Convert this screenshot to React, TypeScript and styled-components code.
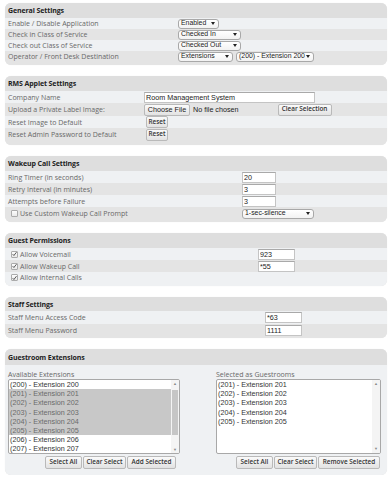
import React from 'react';
import styled, { createGlobalStyle, css } from 'styled-components';

const Global = createGlobalStyle`
  html, body { margin: 0; padding: 0; background: #ffffff; }
  body { font-family: "Open Sans", "Noto Sans", sans-serif; }
  * { box-sizing: border-box; }
`;

const Page = styled.div`
  width: 391px;
  padding: 3px 4px 0 5px;
  display: flex;
  flex-direction: column;
  gap: 11px;
`;

const Panel = styled.section`
  border-radius: 6px;
  overflow: hidden;
  background: #e5e5e5;
  box-shadow: 0 0 1px rgba(0, 0, 0, 0.08);
`;

const Header = styled.div<{ $h?: number }>`
  height: ${(p) => p.$h ?? 15}px;
  background: #dedede;
  display: flex;
  align-items: center;
  padding-left: 3px;
  font-weight: 700;
  font-size: 7px;
  color: #222;
  letter-spacing: -0.1px;
`;

const Row = styled.div<{ $alt?: boolean; $h: number; $labelW: number; $pb?: number }>`
  display: grid;
  grid-template-columns: ${(p) => p.$labelW}px 1fr;
  align-items: center;
  height: ${(p) => p.$h + (p.$pb ?? 0)}px;
  padding-bottom: ${(p) => p.$pb ?? 0}px;
  background: ${(p) => (p.$alt ? '#e4e4e4' : '#eff1f3')};
`;

const Label = styled.div<{ $indent?: number }>`
  padding-left: ${(p) => p.$indent ?? 3}px;
  font-size: 7px;
  color: #686868;
  white-space: nowrap;
  display: flex;
  align-items: center;
  gap: 2px;
`;

const Value = styled.div`
  display: flex;
  align-items: center;
  gap: 3px;
  white-space: nowrap;
`;

const ctrlFont = css`
  font-family: "Liberation Sans", Arial, sans-serif;
  font-size: 7.2px;
  color: #222;
`;

const SelectBox = styled.div<{ $w: number }>`
  font-family: "Liberation Sans", Arial, sans-serif;
  font-size: 6.9px;
  color: #222;
  width: ${(p) => p.$w}px;
  height: 10px;
  border: 1px solid #a8a8a8;
  border-radius: 3px;
  background: linear-gradient(#ffffff, #f2f2f2);
  display: flex;
  align-items: center;
  justify-content: space-between;
  padding: 0 3px 0 2px;
  line-height: 1;
  overflow: hidden;
`;

const Arrow = styled.span`
  width: 0;
  height: 0;
  flex: none;
  margin-left: 1px;
  border-left: 2px solid transparent;
  border-right: 2px solid transparent;
  border-top: 3px solid #222;
`;

const TextInput = styled.input<{ $w: number }>`
  ${ctrlFont}
  width: ${(p) => p.$w}px;
  height: 11px;
  border: 1px solid #c4c4c4;
  border-top-color: #a9a9a9;
  background: #fff;
  padding: 0 1px;
  margin: 0;
  outline: none;
`;

const Button = styled.button<{ $w?: number; $h?: number; $plain?: boolean }>`
  ${(p) =>
    p.$plain
      ? ctrlFont
      : css`
          font-family: "Open Sans", "Noto Sans", sans-serif;
          font-size: 6.4px;
          font-weight: 600;
          color: #333;
        `}
  height: ${(p) => p.$h ?? 12}px;
  ${(p) => (p.$w ? `width: ${p.$w}px;` : '')}
  padding: 0 2px;
  margin: 0;
  border: 1px solid #b9b9b9;
  border-radius: 2px;
  background: linear-gradient(#fafafa, #e2e2e2);
  display: inline-flex;
  align-items: center;
  justify-content: center;
  white-space: nowrap;
  line-height: 1;
`;

const FileNote = styled.span`
  ${ctrlFont}
`;

const Check = styled.span`
  width: 7px;
  height: 7px;
  border: 1px solid #ababab;
  border-radius: 1px;
  background: linear-gradient(#fdfdfd, #e9e9e9);
  display: inline-flex;
  align-items: center;
  justify-content: center;
  flex: none;
`;

const CheckMark = () => (
  <svg width="6" height="6" viewBox="0 0 6 6">
    <path d="M0.8 3.2 L2.3 4.8 L5.4 0.8" fill="none" stroke="#4a4a4a" strokeWidth="1.1" />
  </svg>
);

const ExtBody = styled.div`
  background: #eff1f3;
  display: grid;
  grid-template-columns: 208px 1fr;
  padding: 4px 4px 6px 3px;
`;

const ExtCol = styled.div`
  display: flex;
  flex-direction: column;
  align-items: flex-start;
`;

const ColLabel = styled.div`
  font-size: 7px;
  color: #686868;
  height: 10px;
  display: flex;
  align-items: center;
`;

const ListBox = styled.div<{ $w: number }>`
  width: ${(p) => p.$w}px;
  height: 75px;
  border: 1px solid #a8a8a8;
  border-radius: 2px;
  background: #fff;
  display: grid;
  grid-template-columns: 1fr 8px;
  overflow: hidden;
`;

const Items = styled.div`
  display: flex;
  flex-direction: column;
`;

const Item = styled.div<{ $sel?: boolean }>`
  font-family: "Liberation Sans", Arial, sans-serif;
  font-size: 7.2px;
  height: 9.2px;
  line-height: 9.2px;
  padding-left: 1px;
  color: ${(p) => (p.$sel ? '#6a6a6a' : '#333')};
  background: ${(p) => (p.$sel ? '#c8c8c8' : 'transparent')};
`;

const ScrollBar = styled.div`
  background: #f4f4f4;
  position: relative;
  display: flex;
  flex-direction: column;
  justify-content: space-between;
  align-items: center;
  padding: 2px 0;
  font-size: 4px;
  color: #888;
  line-height: 1;
`;

const Thumb = styled.div`
  position: absolute;
  left: 1px;
  right: 1px;
  background: #c6c6c6;
`;

const ArrowGlyph = styled.span`
  position: relative;
`;

const BtnRow = styled.div<{ $pad: number }>`
  display: flex;
  gap: 1px;
  width: 100%;
  margin-top: 2px;
  padding-left: ${(p) => p.$pad}px;
`;

type ListProps = { items: number[]; selected: number[]; w: number; thumb?: [number, number] };

const List = ({ items, selected, w, thumb }: ListProps) => (
  <ListBox $w={w}>
    <Items>
      {items.map((n) => (
        <Item key={n} $sel={selected.includes(n)}>
          ({n}) - Extension {n}
        </Item>
      ))}
    </Items>
    <ScrollBar>
      {thumb && <Thumb style={{ top: thumb[0], height: thumb[1] }} />}
      <ArrowGlyph>▲</ArrowGlyph>
      <ArrowGlyph>▼</ArrowGlyph>
    </ScrollBar>
  </ListBox>
);

const Spacer = styled.span<{ $w: number }>`
  width: ${(p) => p.$w}px;
  flex: none;
`;

export default function App() {
  return (
    <>
      <Global />
      <Page>
        <Panel>
          <Header>General Settings</Header>
          <Row $h={11} $labelW={173}>
            <Label>Enable / Disable Application</Label>
            <Value>
              <SelectBox $w={41}>Enabled<Arrow /></SelectBox>
            </Value>
          </Row>
          <Row $h={11} $labelW={173} $alt>
            <Label>Check in Class of Service</Label>
            <Value>
              <SelectBox $w={63}>Checked In<Arrow /></SelectBox>
            </Value>
          </Row>
          <Row $h={11} $labelW={173}>
            <Label>Check out Class of Service</Label>
            <Value>
              <SelectBox $w={63}>Checked Out<Arrow /></SelectBox>
            </Value>
          </Row>
          <Row $h={11} $labelW={173} $alt $pb={3}>
            <Label>Operator / Front Desk Destination</Label>
            <Value>
              <SelectBox $w={55}>Extensions<Arrow /></SelectBox>
              <SelectBox $w={78}>(200) - Extension 200<Arrow /></SelectBox>
            </Value>
          </Row>
        </Panel>

        <Panel>
          <Header>RMS Applet Settings</Header>
          <Row $h={12} $labelW={139}>
            <Label>Company Name</Label>
            <Value>
              <TextInput $w={171} defaultValue="Room Management System" />
            </Value>
          </Row>
          <Row $h={13} $labelW={139} $alt>
            <Label>Upload a Private Label Image:</Label>
            <Value>
              <Button $plain $w={46}>Choose File</Button>
              <FileNote>No file chosen</FileNote>
              <Spacer $w={33} />
              <Button $w={54}>Clear Selection</Button>
            </Value>
          </Row>
          <Row $h={12} $labelW={141}>
            <Label>Reset Image to Default</Label>
            <Value>
              <Button $w={22}>Reset</Button>
            </Value>
          </Row>
          <Row $h={13} $labelW={141} $alt $pb={4}>
            <Label>Reset Admin Password to Default</Label>
            <Value>
              <Button $w={22}>Reset</Button>
            </Value>
          </Row>
        </Panel>

        <Panel>
          <Header>Wakeup Call Settings</Header>
          <Row $h={12} $labelW={237}>
            <Label>Ring Timer (in seconds)</Label>
            <Value>
              <TextInput $w={34} defaultValue="20" />
            </Value>
          </Row>
          <Row $h={12} $labelW={237} $alt>
            <Label>Retry Interval (in minutes)</Label>
            <Value>
              <TextInput $w={34} defaultValue="3" />
            </Value>
          </Row>
          <Row $h={12} $labelW={237}>
            <Label>Attempts before Failure</Label>
            <Value>
              <TextInput $w={34} defaultValue="3" />
            </Value>
          </Row>
          <Row $h={13} $labelW={237} $alt $pb={2}>
            <Label $indent={6}>
              <Check />
              Use Custom Wakeup Call Prompt
            </Label>
            <Value>
              <SelectBox $w={72}>1-sec-silence<Arrow /></SelectBox>
            </Value>
          </Row>
        </Panel>

        <Panel>
          <Header>Guest Permissions</Header>
          <Row $h={12} $labelW={253}>
            <Label $indent={6}>
              <Check>
                <CheckMark />
              </Check>
              Allow Voicemail
            </Label>
            <Value>
              <TextInput $w={37} defaultValue="923" />
            </Value>
          </Row>
          <Row $h={12} $labelW={253} $alt>
            <Label $indent={6}>
              <Check>
                <CheckMark />
              </Check>
              Allow Wakeup Call
            </Label>
            <Value>
              <TextInput $w={37} defaultValue="*55" />
            </Value>
          </Row>
          <Row $h={11} $labelW={253} $pb={3}>
            <Label $indent={6}>
              <Check>
                <CheckMark />
              </Check>
              Allow Internal Calls
            </Label>
            <Value />
          </Row>
        </Panel>

        <Panel>
          <Header $h={14}>Staff Settings</Header>
          <Row $h={13} $labelW={260}>
            <Label>Staff Menu Access Code</Label>
            <Value>
              <TextInput $w={37} defaultValue="*63" />
            </Value>
          </Row>
          <Row $h={13} $labelW={260} $alt $pb={1}>
            <Label>Staff Menu Password</Label>
            <Value>
              <TextInput $w={37} defaultValue="1111" />
            </Value>
          </Row>
        </Panel>

        <Panel>
          <Header $h={16}>Guestroom Extensions</Header>
          <ExtBody>
            <ExtCol>
              <ColLabel>Available Extensions</ColLabel>
              <List
                w={172}
                items={[200, 201, 202, 203, 204, 205, 206, 207]}
                selected={[201, 202, 203, 204, 205]}
                thumb={[10, 45]}
              />
              <BtnRow $pad={37}>
                <Button $w={37} $h={13}>Select All</Button>
                <Button $w={43} $h={13}>Clear Select</Button>
                <Button $w={49} $h={13}>Add Selected</Button>
              </BtnRow>
            </ExtCol>
            <ExtCol>
              <ColLabel>Selected as Guestrooms</ColLabel>
              <List w={165} items={[201, 202, 203, 204, 205]} selected={[]} />
              <BtnRow $pad={20}>
                <Button $w={37} $h={13}>Select All</Button>
                <Button $w={43} $h={13}>Clear Select</Button>
                <Button $w={62} $h={13}>Remove Selected</Button>
              </BtnRow>
            </ExtCol>
          </ExtBody>
        </Panel>
      </Page>
    </>
  );
}
